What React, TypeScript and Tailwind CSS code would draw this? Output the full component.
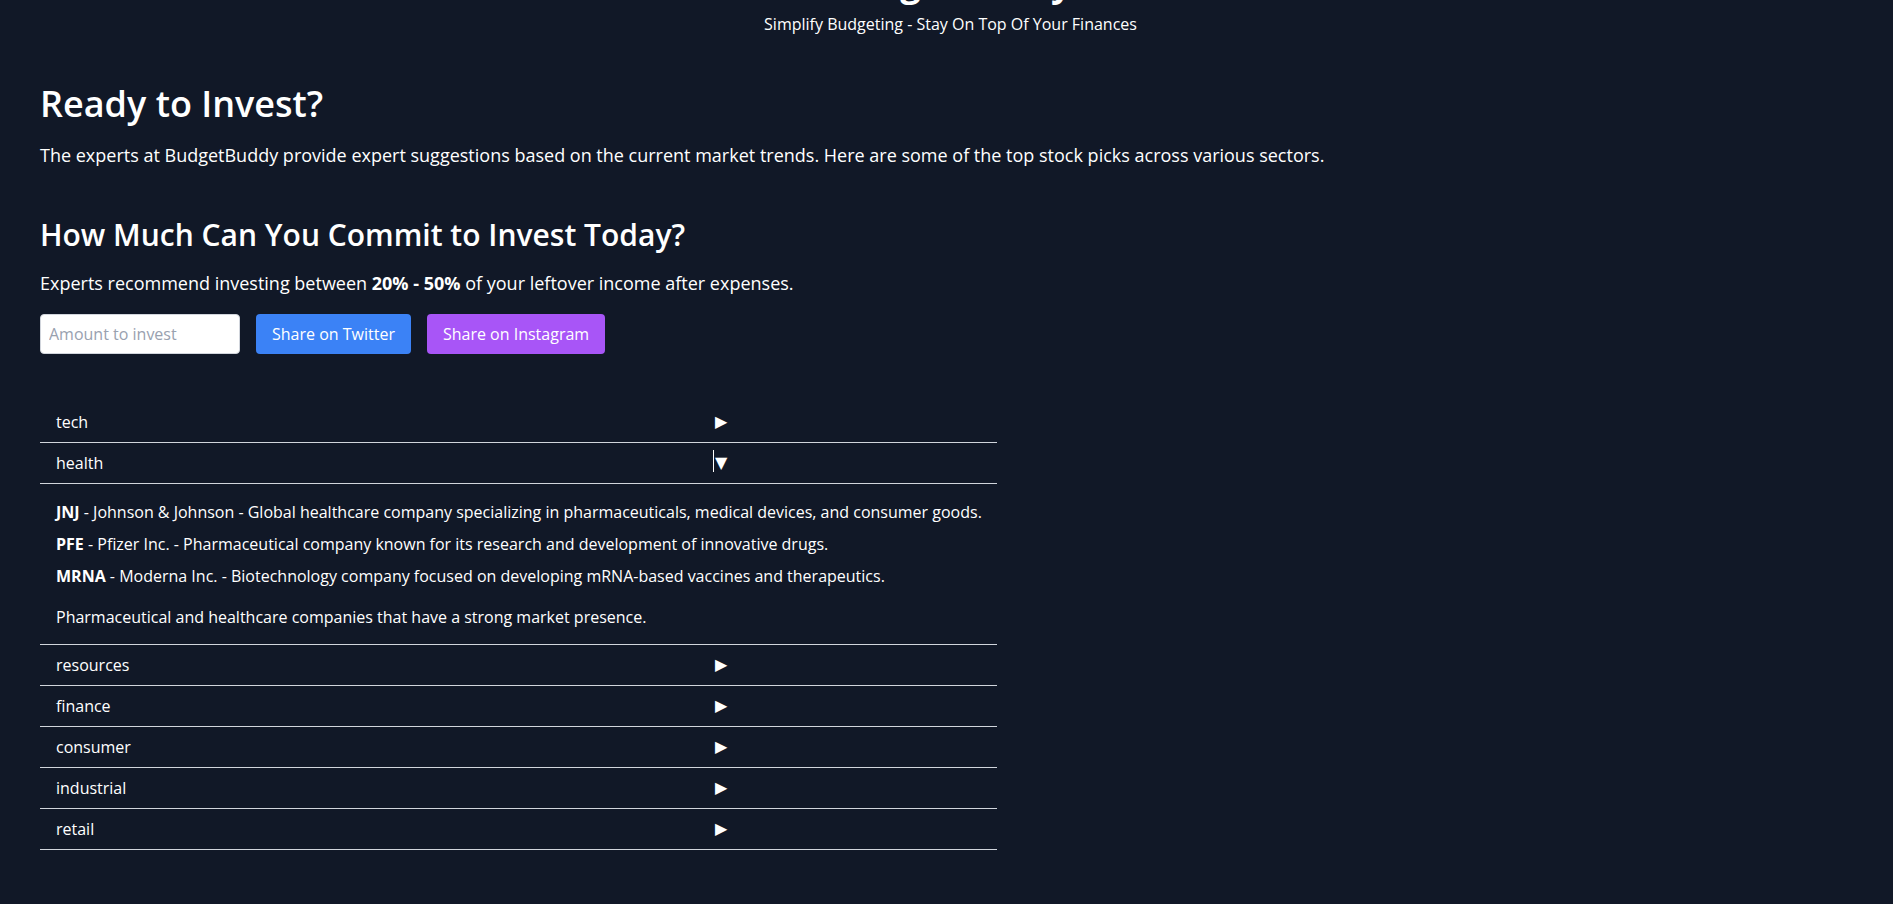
import {useState} from "react";

interface Sector {
  name: string;
  picks: {ticker: string; text: string}[];
  summary: string;
}

const sectors: Sector[] = [
  {name: "tech", picks: [], summary: ""},
  {
    name: "health",
    picks: [
      {
        ticker: "JNJ",
        text: "Johnson & Johnson - Global healthcare company specializing in pharmaceuticals, medical devices, and consumer goods.",
      },
      {
        ticker: "PFE",
        text: "Pfizer Inc. - Pharmaceutical company known for its research and development of innovative drugs.",
      },
      {
        ticker: "MRNA",
        text: "Moderna Inc. - Biotechnology company focused on developing mRNA-based vaccines and therapeutics.",
      },
    ],
    summary: "Pharmaceutical and healthcare companies that have a strong market presence.",
  },
  {name: "resources", picks: [], summary: ""},
  {name: "finance", picks: [], summary: ""},
  {name: "consumer", picks: [], summary: ""},
  {name: "industrial", picks: [], summary: ""},
  {name: "retail", picks: [], summary: ""},
];

const App = () => {
  const [open, setOpen] = useState<string | null>("health");
  const [amount, setAmount] = useState("");

  return (
    <div className="min-h-screen bg-[#111827] text-white font-['Open_Sans',sans-serif] overflow-hidden">
      <header className="-mt-[37px] pl-2 text-center">
        <h1 className="text-4xl font-bold">BudgetBuddy</h1>
        <p className="mt-[9px] text-base">Simplify Budgeting - Stay On Top Of Your Finances</p>
      </header>

      <main className="px-10 pt-[48px]">
        <h2 className="text-4xl font-semibold">Ready to Invest?</h2>
        <p className="mt-[17px] text-lg">
          The experts at BudgetBuddy provide expert suggestions based on the current market trends. Here are some of
          the top stock picks across various sectors.
        </p>

        <h3 className="mt-12 text-3xl font-semibold">How Much Can You Commit to Invest Today?</h3>
        <p className="mt-4 text-lg">
          Experts recommend investing between <span className="font-bold">20% - 50%</span> of your leftover income
          after expenses.
        </p>

        <div className="mt-[17px] flex gap-4">
          <input
            type="text"
            value={amount}
            onChange={(e) => setAmount(e.target.value)}
            placeholder="Amount to invest"
            className="w-[200px] h-10 px-2 rounded bg-white border border-gray-300 text-gray-900 placeholder:text-gray-400 outline-none"
          />
          <button type="button" className="h-10 px-4 rounded bg-[#3b82f6] text-white">
            Share on Twitter
          </button>
          <button type="button" className="h-10 px-4 rounded bg-[#a855f7] text-white">
            Share on Instagram
          </button>
        </div>

        <div className="mt-12 w-[957px]">
          {sectors.map((sector) => {
            const isOpen = open === sector.name;
            return (
              <div key={sector.name} className="border-b border-gray-300">
                <button
                  type="button"
                  onClick={() => setOpen(isOpen ? null : sector.name)}
                  className="w-full h-10 px-4 flex items-center text-left"
                >
                  <span className="w-[659px]">{sector.name}</span>
                  <span className="relative font-['DejaVu_Sans',sans-serif] text-base">
                    {isOpen && <span className="absolute -left-[2px] top-[-1px] w-px h-[22px] bg-white" />}
                    {isOpen ? "▼" : "▶"}
                  </span>
                </button>
                {isOpen && (
                  <div className="border-t border-gray-300 pt-4 pb-[15px] pl-4 pr-2 text-base">
                    <ul className="space-y-2">
                      {sector.picks.map((pick) => (
                        <li key={pick.ticker} className="whitespace-nowrap">
                          <span className="font-bold">{pick.ticker}</span> - {pick.text}
                        </li>
                      ))}
                    </ul>
                    <p className="mt-[17px]">{sector.summary}</p>
                  </div>
                )}
              </div>
            );
          })}
        </div>
      </main>
    </div>
  );
};

export default App;
